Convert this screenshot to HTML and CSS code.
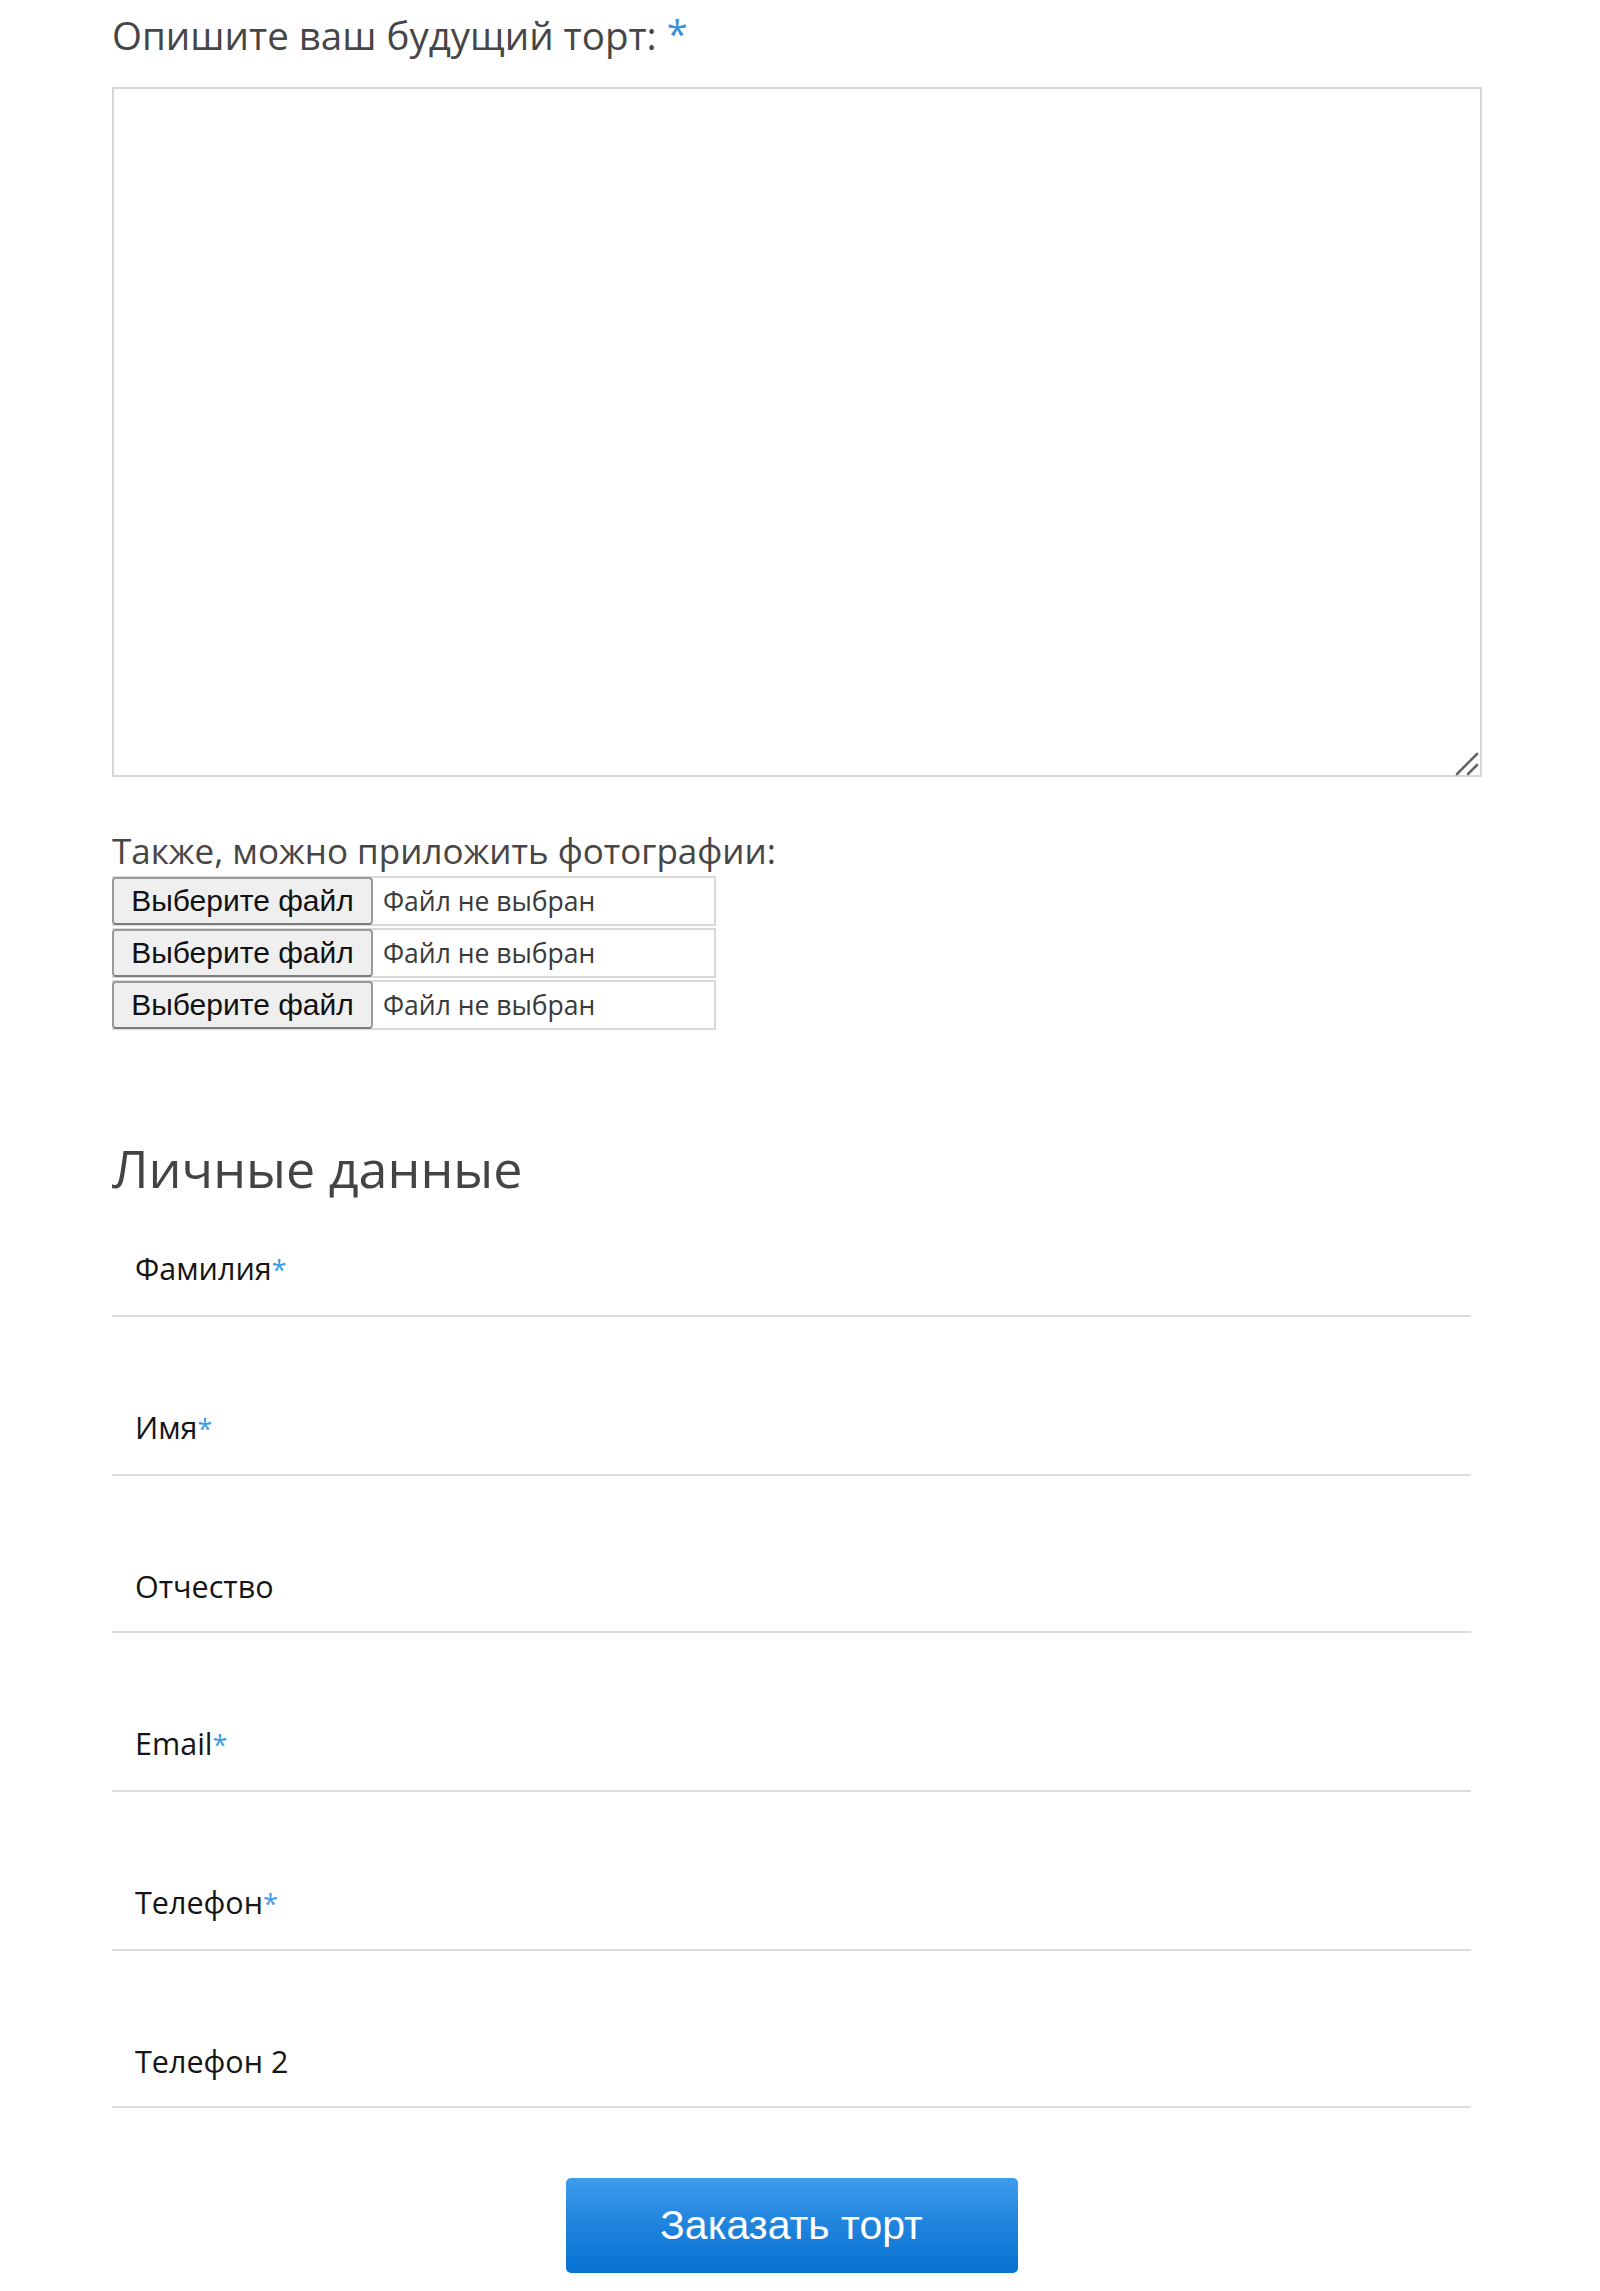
FILE: index.html
```html
<!DOCTYPE html>
<html lang="ru">
<head>
<meta charset="utf-8">
<title>Заказать торт</title>
<link rel="stylesheet" href="styles.css">
</head>
<body>
<form class="page">
  <label class="title" for="desc">Опишите ваш будущий торт: <span class="req-big">*</span></label>
  <div class="area-wrap">
    <textarea id="desc" class="area"></textarea>
    <svg class="grip" width="24" height="24" viewBox="0 0 24 24" aria-hidden="true">
      <line x1="2" y1="22" x2="22" y2="2" stroke="#666666" stroke-width="2.6" stroke-linecap="round"/>
      <line x1="13" y1="22" x2="22" y2="13" stroke="#666666" stroke-width="2.6" stroke-linecap="round"/>
    </svg>
  </div>

  <div class="caption">Также, можно приложить фотографии:</div>
  <div class="files">
    <div class="file"><span class="file-btn">Выберите файл</span><span class="file-name">Файл не выбран</span></div>
    <div class="file"><span class="file-btn">Выберите файл</span><span class="file-name">Файл не выбран</span></div>
    <div class="file"><span class="file-btn">Выберите файл</span><span class="file-name">Файл не выбран</span></div>
  </div>

  <h2 class="heading">Личные данные</h2>
  <div class="fields">
    <div class="field"><span class="label">Фамилия<span class="req">*</span></span></div>
    <div class="field"><span class="label">Имя<span class="req">*</span></span></div>
    <div class="field"><span class="label">Отчество</span></div>
    <div class="field"><span class="label">Email<span class="req">*</span></span></div>
    <div class="field"><span class="label">Телефон<span class="req">*</span></span></div>
    <div class="field"><span class="label">Телефон 2</span></div>
  </div>

  <div class="submit-row">
    <button type="button" class="submit">Заказать торт</button>
  </div>
</form>
</body>
</html>
```

FILE: styles.css
```css
html, body {
  margin: 0;
  padding: 0;
  background: #ffffff;
}

.page {
  display: flex;
  flex-direction: column;
  width: 1370px;
  margin-left: 112px;
  padding-top: 9px;
  font-family: "Open Sans", "Noto Sans", sans-serif;
}

.title {
  display: block;
  font-size: 38.5px;
  line-height: 48px;
  color: #464646;
}

.req-big {
  color: #3b8fe0;
  font-size: 38px;
  vertical-align: 2px;
}

.area-wrap {
  position: relative;
  margin-top: 28px;
  width: 1370px;
  height: 690px;
}

.area {
  display: block;
  box-sizing: border-box;
  width: 100%;
  height: 100%;
  margin: 0;
  border: 2px solid #d6d6d6;
  resize: none;
  outline: none;
  font-family: "Open Sans", sans-serif;
  font-size: 28px;
}

.grip {
  position: absolute;
  right: 3px;
  bottom: 1px;
}

.caption {
  display: block;
  margin-top: 50px;
  font-size: 35px;
  line-height: 48px;
  color: #464646;
}

.files {
  display: flex;
  flex-direction: column;
  gap: 2px;
  margin-top: 1px;
}

.file {
  display: flex;
  align-items: center;
  box-sizing: border-box;
  width: 604px;
  height: 50px;
  border: 2px solid #d9d9d9;
  border-left: none;
}

.file-btn {
  box-sizing: border-box;
  height: 48px;
  width: 261px;
  margin-top: -1px;
  display: flex;
  align-items: center;
  justify-content: center;
  background: #efefef;
  border: 2px solid #9a9a9a;
  border-bottom-color: #7d7d7d;
  border-radius: 4px;
  font-family: "Liberation Sans", Arial, sans-serif;
  font-size: 30px;
  color: #111111;
}

.file-name {
  padding-left: 10px;
  font-size: 26.5px;
  color: #3a3a3a;
}

.heading {
  margin: 106px 0 0 0;
  font-size: 52px;
  line-height: 64px;
  font-weight: 400;
  color: #444444;
}

.fields {
  display: flex;
  flex-direction: column;
  gap: 90px;
  margin-top: 48px;
  width: 1359px;
}

.field {
  padding: 0 0 25px 23px;
  border-bottom: 2px solid #dcdcdc;
}

.label {
  display: block;
  font-size: 30.5px;
  line-height: 40px;
  color: #151515;
}

.req {
  color: #3d9be9;
  font-size: 27px;
}

.submit-row {
  display: flex;
  justify-content: center;
  width: 1359px;
  margin-top: 70px;
}

.submit {
  width: 452px;
  height: 95px;
  border: none;
  border-radius: 5px;
  background: linear-gradient(to bottom, #3d9ced 0%, #1f83dc 50%, #0873d3 100%);
  color: #ffffff;
  font-family: "Liberation Sans", Arial, sans-serif;
  font-size: 41px;
  cursor: pointer;
}
```
